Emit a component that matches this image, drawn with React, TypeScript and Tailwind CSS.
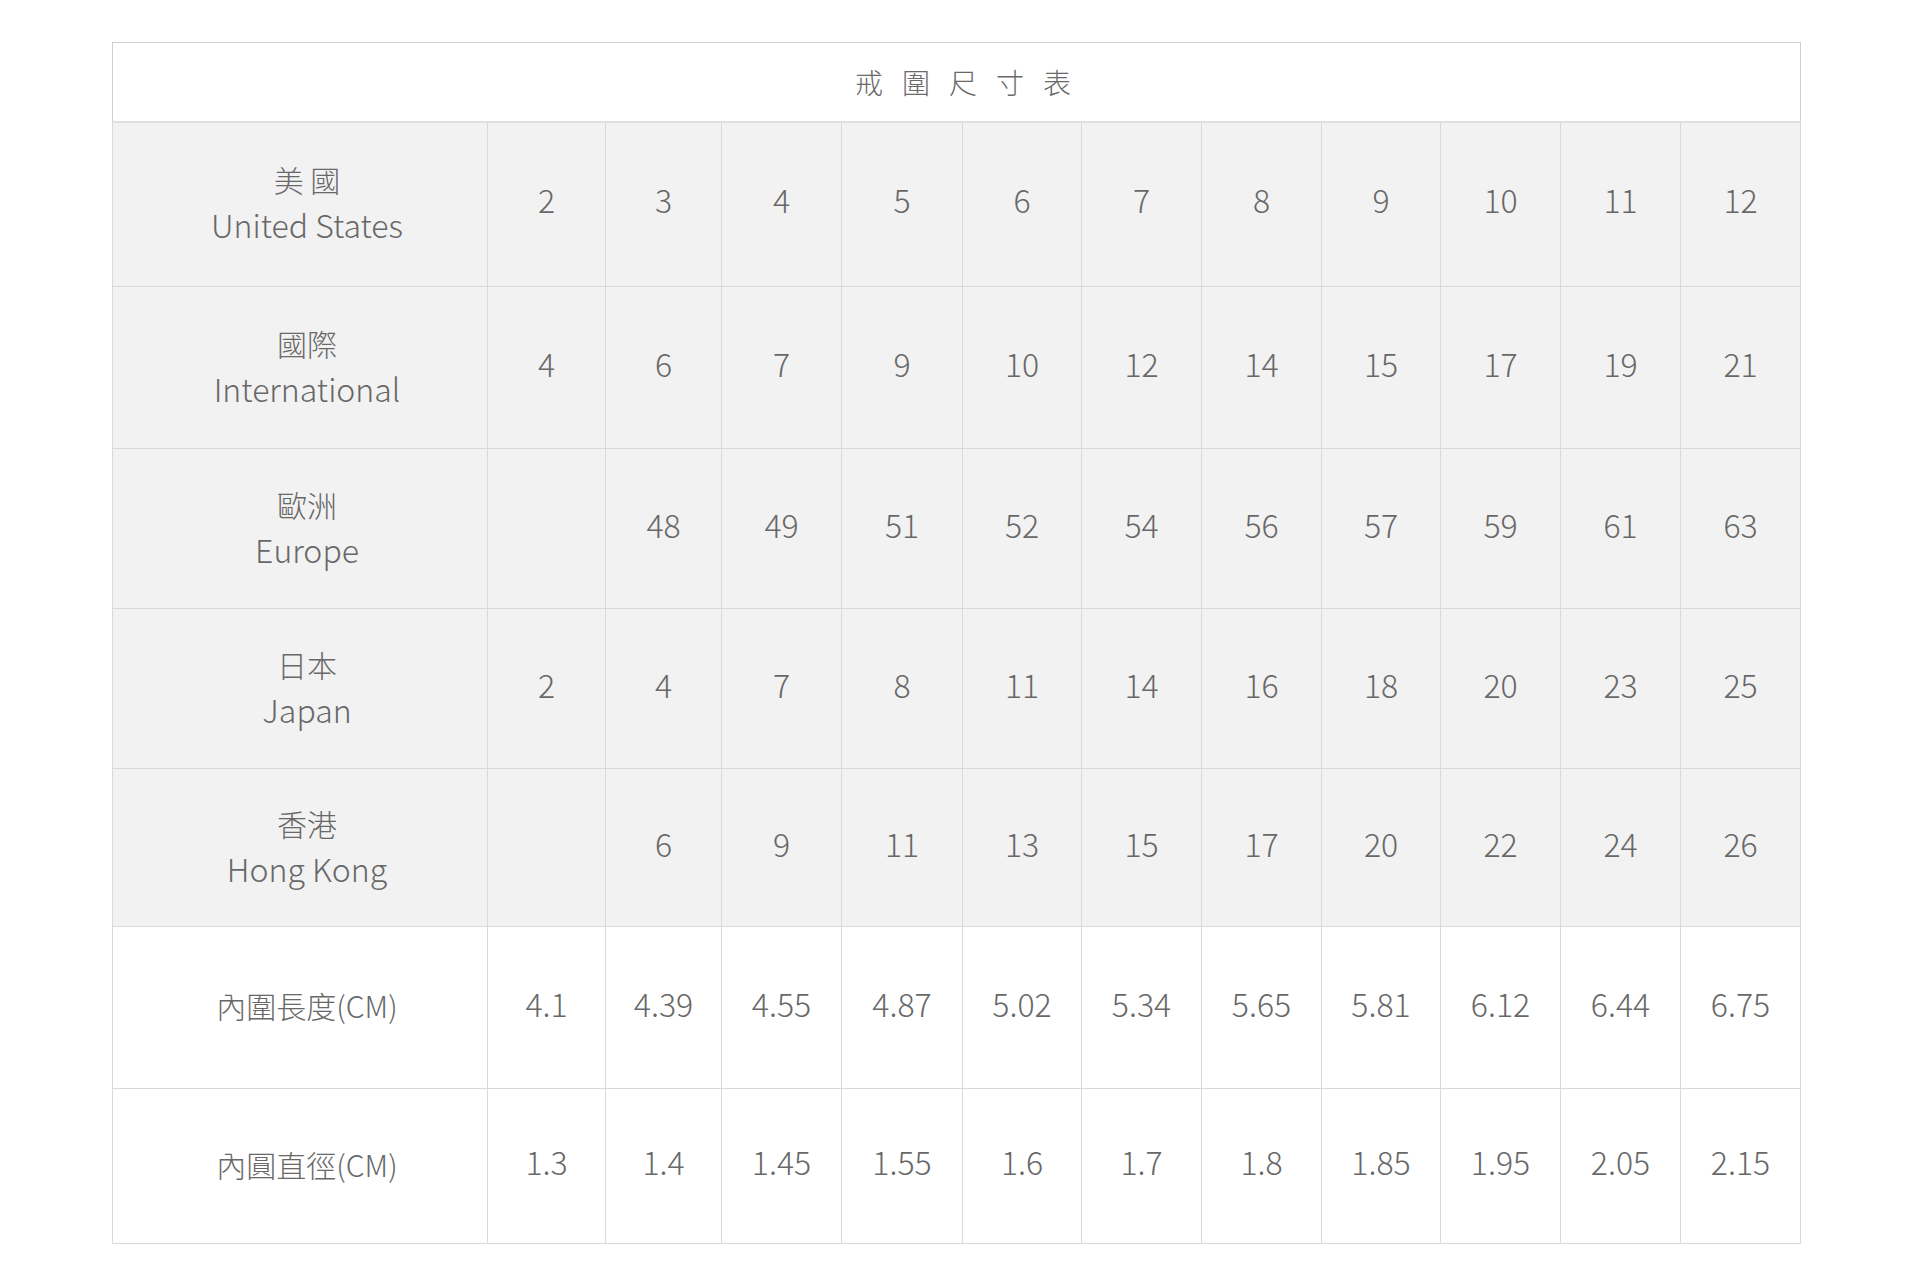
const rows: { zh: string; en?: string; values: string[]; shaded: boolean; h: string }[] = [
  { zh: "美 國", en: "United States", values: ["2", "3", "4", "5", "6", "7", "8", "9", "10", "11", "12"], shaded: true, h: "h-[165px]" },
  { zh: "國際", en: "International", values: ["4", "6", "7", "9", "10", "12", "14", "15", "17", "19", "21"], shaded: true, h: "h-[162px]" },
  { zh: "歐洲", en: "Europe", values: ["", "48", "49", "51", "52", "54", "56", "57", "59", "61", "63"], shaded: true, h: "h-[160px]" },
  { zh: "日本", en: "Japan", values: ["2", "4", "7", "8", "11", "14", "16", "18", "20", "23", "25"], shaded: true, h: "h-[160px]" },
  { zh: "香港", en: "Hong Kong", values: ["", "6", "9", "11", "13", "15", "17", "20", "22", "24", "26"], shaded: true, h: "h-[158px]" },
  { zh: "內圍長度(CM)", values: ["4.1", "4.39", "4.55", "4.87", "5.02", "5.34", "5.65", "5.81", "6.12", "6.44", "6.75"], shaded: false, h: "h-[162px]" },
  { zh: "內圓直徑(CM)", values: ["1.3", "1.4", "1.45", "1.55", "1.6", "1.7", "1.8", "1.85", "1.95", "2.05", "2.15"], shaded: false, h: "h-[155px]" },
];

// measured column widths of the size columns
const colWidths = ["w-[118px]", "w-[116px]", "w-[120px]", "w-[121px]", "w-[119px]", "w-[120px]", "w-[120px]", "w-[119px]", "w-[120px]", "w-[120px]", "w-[120px]"];

export default function App() {
  return (
    <div className="min-h-[1280px] bg-white pt-[42px] pl-[112px] font-['Noto_Sans_CJK_TC','Noto_Sans_CJK_SC',sans-serif] font-light text-[#686868]">
      <table className="w-[1689px] table-fixed border-collapse border border-[#cfcfcf]">
        <colgroup>
          <col className="w-[375px]" />
          {colWidths.map((w, i) => (
            <col key={i} className={w} />
          ))}
        </colgroup>
        <thead>
          <tr className="h-[79px] border-b-2 border-[#e0e0e0]">
            <th colSpan={12} className="text-center text-[28px] font-light tracking-[19px] text-[#6a6a6a]">
              <span className="pl-[32px]">戒圍尺寸表</span>
            </th>
          </tr>
        </thead>
        <tbody>
          {rows.map((row) => (
            <tr key={row.zh} className={`${row.h} ${row.shaded ? "bg-[#f2f2f2]" : "bg-white"}`}>
              <td className="border border-[#d9d9d9] pl-[14px] pb-[4px] text-center text-[32px] leading-[45px]">
                <div className="text-[30px]">{row.zh}</div>
                {row.en && <div>{row.en}</div>}
              </td>
              {row.values.map((v, i) => (
                <td key={i} className="border border-[#d9d9d9] pb-[10px] text-center text-[32px]">
                  {v}
                </td>
              ))}
            </tr>
          ))}
        </tbody>
      </table>
    </div>
  );
}
